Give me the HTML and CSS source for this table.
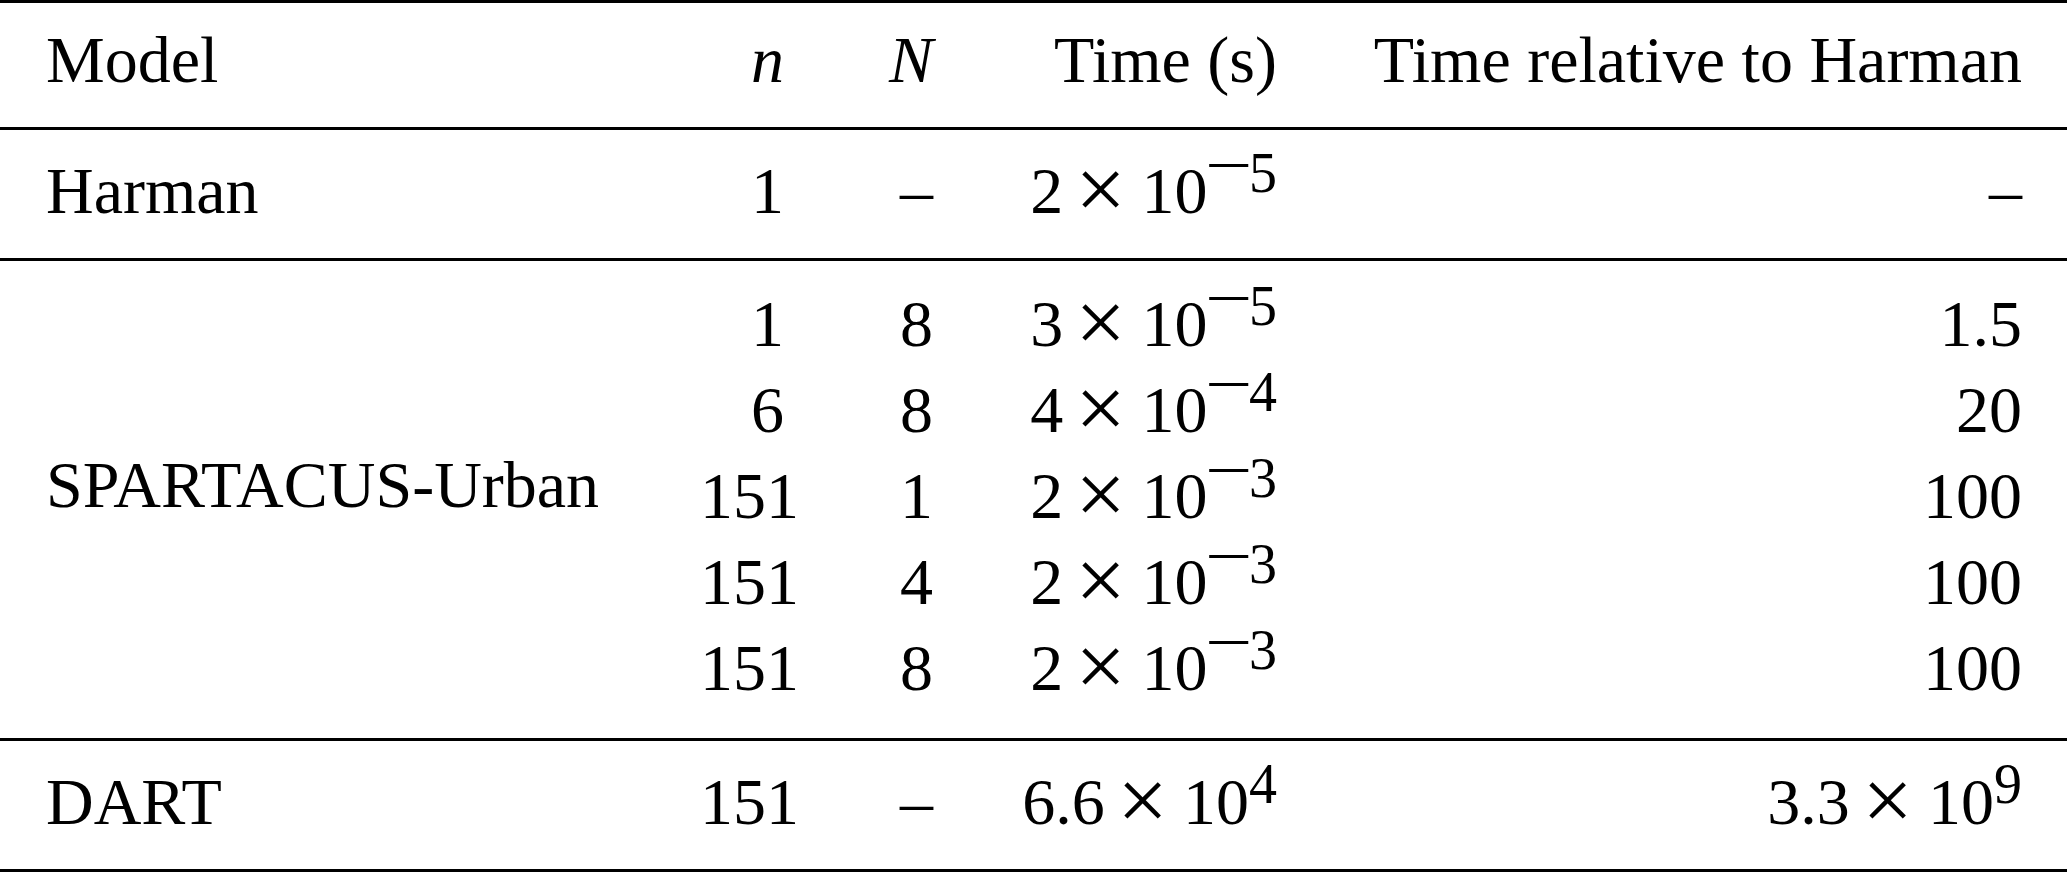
FILE: index.html
```html
<!DOCTYPE html>
<html lang="en">
<head>
    <meta charset="UTF-8">
    <meta name="viewport" content="width=device-width, initial-scale=1.0">
    <title>Model timings</title>
    <link rel="stylesheet" href="styles.css">
</head>
<body>
    <table class="timing">
        <colgroup>
            <col class="col-model">
            <col class="col-n">
            <col class="col-bign">
            <col class="col-time">
            <col class="col-rel">
        </colgroup>
        <thead>
            <tr>
                <th class="model">Model</th>
                <th><i>n</i></th>
                <th><i>N</i></th>
                <th>Time (s)</th>
                <th class="last">Time relative to Harman</th>
            </tr>
        </thead>
        <tbody class="harman">
            <tr>
                <td class="model">Harman</td>
                <td>1</td>
                <td>–</td>
                <td>2<span class="times">×</span>10<sup><span class="minus">−</span>5</sup></td>
                <td class="last">–</td>
            </tr>
        </tbody>
        <tbody class="spartacus">
            <tr class="first">
                <td class="model group-name" rowspan="5">SPARTACUS-Urban</td>
                <td>1</td>
                <td>8</td>
                <td>3<span class="times">×</span>10<sup><span class="minus">−</span>5</sup></td>
                <td class="last">1.5</td>
            </tr>
            <tr>
                <td>6</td>
                <td>8</td>
                <td>4<span class="times">×</span>10<sup><span class="minus">−</span>4</sup></td>
                <td class="last">20</td>
            </tr>
            <tr>
                <td>151</td>
                <td>1</td>
                <td>2<span class="times">×</span>10<sup><span class="minus">−</span>3</sup></td>
                <td class="last">100</td>
            </tr>
            <tr>
                <td>151</td>
                <td>4</td>
                <td>2<span class="times">×</span>10<sup><span class="minus">−</span>3</sup></td>
                <td class="last">100</td>
            </tr>
            <tr class="final">
                <td>151</td>
                <td>8</td>
                <td>2<span class="times">×</span>10<sup><span class="minus">−</span>3</sup></td>
                <td class="last">100</td>
            </tr>
        </tbody>
        <tbody class="dart">
            <tr>
                <td class="model">DART</td>
                <td>151</td>
                <td>–</td>
                <td>6.6<span class="times">×</span>10<sup>4</sup></td>
                <td class="last">3.3<span class="times">×</span>10<sup>9</sup></td>
            </tr>
        </tbody>
    </table>
</body>
</html>
```

FILE: styles.css
```css
html {
    background: #fff;
}

body {
    margin: 0;
    color: #000;
    font-family: "Liberation Serif", "Times New Roman", serif;
}

.timing {
    width: 2067px;
    border-collapse: collapse;
    table-layout: fixed;
    font-size: 66px;
    line-height: 86px;
    border-bottom: 3px solid #000;
}

.col-model { width: 700px; }
.col-n { width: 84px; }
.col-bign { width: 149px; }
.col-time { width: 344px; }
.col-rel { width: 790px; }

th,
td {
    padding: 0;
    text-align: right;
    font-weight: normal;
    white-space: nowrap;
    vertical-align: baseline;
}

.model {
    text-align: left;
    padding-left: 46px;
}

.last {
    padding-right: 45px;
}

thead,
tbody {
    border-top: 3px solid #000;
}

thead th {
    padding-top: 14px;
    padding-bottom: 24px;
}

.harman td {
    padding-top: 18px;
    padding-bottom: 24px;
}

.spartacus .first td {
    padding-top: 20px;
}

.spartacus .final td {
    padding-bottom: 27px;
}

.spartacus .group-name {
    vertical-align: middle;
    padding-top: 20px;
    padding-bottom: 49px;
}

.dart td {
    padding-top: 18px;
    padding-bottom: 24px;
}

/* math bits: 2 × 10^-5 */
.times {
    display: inline-block;
    line-height: 40px;
    margin: 0 22px 0 19px;
    transform: scale(1.36);
    transform-origin: 50% 24px;
}

sup {
    font-size: 56px;
    line-height: 0;
    vertical-align: 21px;
}

.minus {
    display: inline-block;
    margin: 0 4px 0 6px;
    vertical-align: 8px;
    transform: scale(1.5, 1.1);
}
```
